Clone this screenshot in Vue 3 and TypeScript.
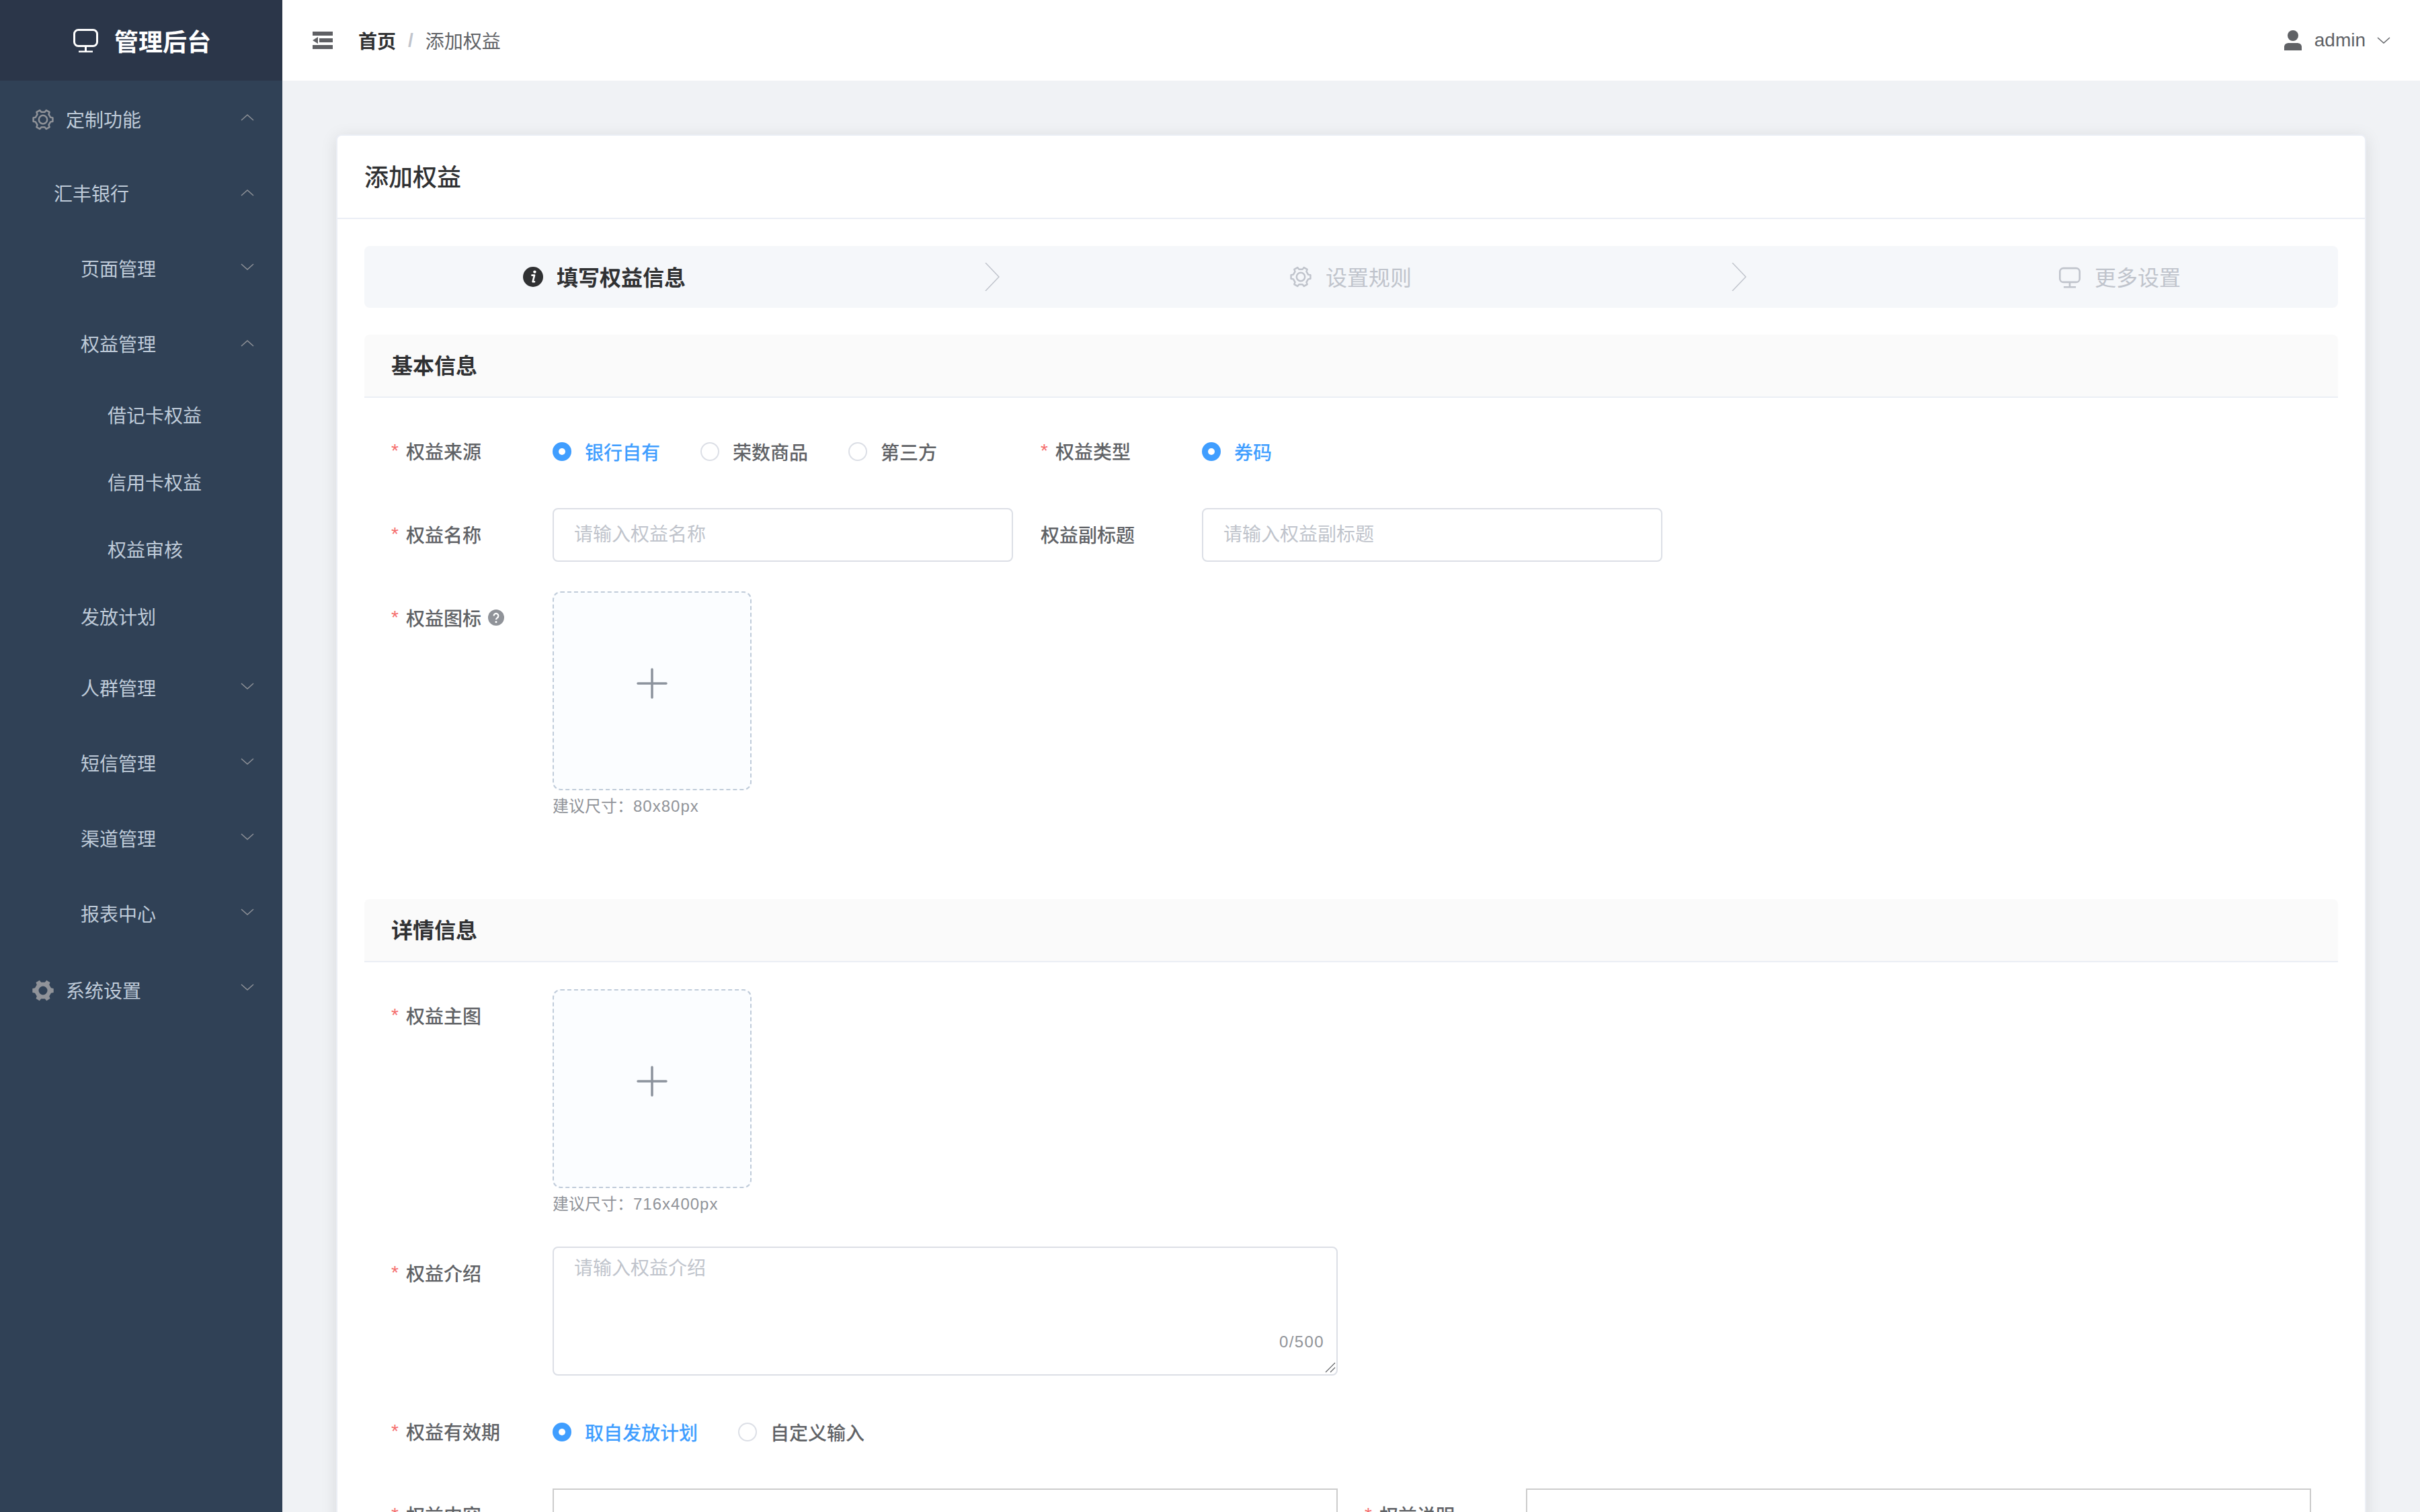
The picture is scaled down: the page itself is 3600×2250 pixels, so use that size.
<template>
  <div class="layout">
    <aside class="sidebar">
      <div class="logo">
        <svg class="logo-icon" viewBox="0 0 37 35" fill="none" stroke="currentColor" stroke-width="3">
          <rect x="1.5" y="1.5" width="34" height="24" rx="6" />
          <path d="M18.5 26v8M8 34h21" />
        </svg>
        <span>管理后台</span>
      </div>
      <nav class="menu">
        <div
          v-for="item in menu"
          :key="item.label"
          :class="['menu-row', 'level-' + item.level, { leaf: !item.arrow }]"
        >
          <svg v-if="item.icon === 'gear'" class="menu-icon" viewBox="0 0 32 32" fill="none" stroke="#909399" stroke-width="2.5" stroke-linejoin="round">
            <path :d="gearOutline" />
            <circle cx="16" cy="16" r="6.2" />
          </svg>
          <svg v-if="item.icon === 'tools'" class="menu-icon" viewBox="0 0 32 32" fill="#909399" fill-rule="evenodd">
            <path :d="gearSolid + ' M22.5 16a6.5 6.5 0 1 0-13 0a6.5 6.5 0 1 0 13 0z'" />
          </svg>
          <span class="menu-label">{{ item.label }}</span>
          <svg v-if="item.arrow" :class="['menu-arrow', item.arrow]" viewBox="0 0 20 10" fill="none" stroke="#909399" stroke-width="1.5">
            <path d="M1 1l9 8 9-8" />
          </svg>
        </div>
      </nav>
    </aside>

    <div class="page">
      <header class="topbar">
        <svg class="hamburger" viewBox="0 0 30 26" fill="#5f6064">
          <rect x="0" y="0" width="30" height="6" />
          <rect x="10" y="10" width="20" height="6" />
          <rect x="0" y="20" width="30" height="6" />
          <path d="M8 8v10L0 13z" />
        </svg>
        <div class="breadcrumb">
          <span class="crumb-home">首页</span>
          <span class="crumb-sep">/</span>
          <span class="crumb-current">添加权益</span>
        </div>
        <div class="user">
          <svg class="user-icon" viewBox="0 0 28 30" fill="#606266">
            <circle cx="14" cy="8" r="8" />
            <path d="M1 30v-5c0-4 3-6 7-6h12c4 0 7 2 7 6v5z" />
          </svg>
          <span>admin</span>
          <svg class="user-arrow" viewBox="0 0 20 10" fill="none" stroke="#606266" stroke-width="1.5">
            <path d="M1 1l9 8 9-8" />
          </svg>
        </div>
      </header>

      <main class="content">
        <section class="card">
          <div class="card-header">添加权益</div>
          <div class="card-body">
            <div class="steps">
              <div class="step active">
                <svg class="step-info" viewBox="0 0 30 30">
                  <circle cx="15" cy="15" r="15" fill="#303133" />
                  <circle cx="17.4" cy="7.6" r="2.2" fill="#fff" />
                  <path d="M13.4 12.6h3.6l-2.4 9.6h2.4" fill="none" stroke="#fff" stroke-width="2.6" stroke-linecap="round" stroke-linejoin="round" />
                </svg>
                <span class="step-text">填写权益信息</span>
              </div>
              <svg class="step-arrow first" viewBox="0 0 22 42" fill="none" stroke="#c0c4cc" stroke-width="1.5">
                <path d="M1 0l20 21L1 42" />
              </svg>
              <div class="step">
                <svg class="step-icon" viewBox="0 0 32 32" fill="none" stroke="#c0c4cc" stroke-width="2.5" stroke-linejoin="round">
                  <path :d="gearOutline" />
                  <circle cx="16" cy="16" r="6.2" />
                </svg>
                <span class="step-text">设置规则</span>
              </div>
              <svg class="step-arrow second" viewBox="0 0 22 42" fill="none" stroke="#c0c4cc" stroke-width="1.5">
                <path d="M1 0l20 21L1 42" />
              </svg>
              <div class="step">
                <svg class="step-icon monitor" viewBox="0 0 37 35" fill="none" stroke="#c0c4cc" stroke-width="3">
                  <rect x="1.5" y="1.5" width="34" height="24" rx="6" />
                  <path d="M18.5 26v8M8 34h21" />
                </svg>
                <span class="step-text">更多设置</span>
              </div>
            </div>

            <div class="section-title">基本信息</div>
            <div class="form basic">
              <div class="row">
                <div class="field">
                  <label class="label"><i class="star">*</i>权益来源</label>
                  <div class="control radios">
                    <span v-for="opt in sources" :key="opt.text" :class="['radio', { checked: opt.checked }]">
                      <i class="dot"></i>{{ opt.text }}
                    </span>
                  </div>
                </div>
                <div class="field">
                  <label class="label"><i class="star">*</i>权益类型</label>
                  <div class="control radios">
                    <span class="radio checked"><i class="dot"></i>券码</span>
                  </div>
                </div>
              </div>
              <div class="row">
                <div class="field">
                  <label class="label"><i class="star">*</i>权益名称</label>
                  <div class="control">
                    <input class="input" type="text" placeholder="请输入权益名称" />
                  </div>
                </div>
                <div class="field">
                  <label class="label">权益副标题</label>
                  <div class="control">
                    <input class="input" type="text" placeholder="请输入权益副标题" />
                  </div>
                </div>
              </div>
              <div class="row">
                <div class="field">
                  <label class="label">
                    <i class="star">*</i>权益图标
                    <svg class="help" viewBox="0 0 24 24">
                      <circle cx="12" cy="12" r="12" fill="#909399" />
                      <path d="M8.6 9.4a3.4 3.4 0 1 1 5.2 2.9c-1.2.8-1.8 1.4-1.8 2.7" fill="none" stroke="#fff" stroke-width="2.2" />
                      <circle cx="12" cy="18.4" r="1.5" fill="#fff" />
                    </svg>
                  </label>
                  <div class="control">
                    <div class="upload">
                      <svg class="plus" viewBox="0 0 46 46" stroke="#8c939d" stroke-width="3.5" stroke-linecap="round">
                        <path d="M23 2v42M2 23h42" />
                      </svg>
                    </div>
                    <div class="hint">建议尺寸：<span class="spaced">80x80px</span></div>
                  </div>
                </div>
              </div>
            </div>

            <div class="section-title">详情信息</div>
            <div class="form">
              <div class="row">
                <div class="field">
                  <label class="label"><i class="star">*</i>权益主图</label>
                  <div class="control">
                    <div class="upload">
                      <svg class="plus" viewBox="0 0 46 46" stroke="#8c939d" stroke-width="3.5" stroke-linecap="round">
                        <path d="M23 2v42M2 23h42" />
                      </svg>
                    </div>
                    <div class="hint">建议尺寸：<span class="spaced">716x400px</span></div>
                  </div>
                </div>
              </div>
              <div class="row">
                <div class="field">
                  <label class="label"><i class="star">*</i>权益介绍</label>
                  <div class="control wide textarea-wrap">
                    <textarea class="textarea" placeholder="请输入权益介绍"></textarea>
                    <span class="count">0/500</span>
                    <svg class="grip" viewBox="0 0 16 16" fill="none" stroke="#606266" stroke-width="1.2">
                      <path d="M15 1L1 15M15 8l-7 7" />
                    </svg>
                  </div>
                </div>
              </div>
              <div class="row">
                <div class="field">
                  <label class="label"><i class="star">*</i>权益有效期</label>
                  <div class="control radios">
                    <span class="radio checked"><i class="dot"></i>取自发放计划</span>
                    <span class="radio"><i class="dot"></i>自定义输入</span>
                  </div>
                </div>
              </div>
              <div class="row editors">
                <div class="field">
                  <label class="label"><i class="star">*</i>权益内容</label>
                  <div class="control wide"><div class="editor"></div></div>
                </div>
                <div class="field">
                  <label class="label"><i class="star">*</i>权益说明</label>
                  <div class="control wide"><div class="editor"></div></div>
                </div>
              </div>
            </div>
          </div>
        </section>
      </main>
    </div>
  </div>
</template>

<script setup lang="ts">
interface MenuItem {
  label: string;
  level: number;
  arrow?: "up" | "down";
  icon?: "gear" | "tools";
}

const menu: MenuItem[] = [
  { label: "定制功能", level: 0, arrow: "up", icon: "gear" },
  { label: "汇丰银行", level: 1, arrow: "up" },
  { label: "页面管理", level: 2, arrow: "down" },
  { label: "权益管理", level: 2, arrow: "up" },
  { label: "借记卡权益", level: 3 },
  { label: "信用卡权益", level: 3 },
  { label: "权益审核", level: 3 },
  { label: "发放计划", level: 2 },
  { label: "人群管理", level: 2, arrow: "down" },
  { label: "短信管理", level: 2, arrow: "down" },
  { label: "渠道管理", level: 2, arrow: "down" },
  { label: "报表中心", level: 2, arrow: "down" },
  { label: "系统设置", level: 0, arrow: "down", icon: "tools" },
];

const sources = [
  { text: "银行自有", checked: true },
  { text: "荣数商品", checked: false },
  { text: "第三方", checked: false },
];

// six-tooth gear centred in a 32x32 box
function gear(outer: number, inner: number): string {
  const pts: string[] = [];
  for (let i = 0; i < 6; i++) {
    const a = i * 60;
    const spots: [number, number][] = [
      [a - 17, inner],
      [a - 11, outer],
      [a + 11, outer],
      [a + 17, inner],
    ];
    for (const [deg, r] of spots) {
      const rad = (deg * Math.PI) / 180;
      pts.push(`${(16 + r * Math.cos(rad)).toFixed(2)} ${(16 + r * Math.sin(rad)).toFixed(2)}`);
    }
  }
  return "M" + pts.join("L") + "Z";
}

const gearOutline = gear(14.7, 11.6);
const gearSolid = gear(16, 12.6);
</script>

<style scoped>
.layout {
  display: flex;
  height: 100vh;
  overflow: hidden;
  font-family: "Liberation Sans", "Noto Sans CJK SC", sans-serif;
  font-size: 28px;
  color: #606266;
}

.sidebar {
  width: 420px;
  flex-shrink: 0;
  background-color: #304156;
}

.logo {
  height: 120px;
  background-color: #2b3649;
  color: #fff;
  display: flex;
  align-items: center;
  padding-left: 109px;
  gap: 24px;
  font-size: 36px;
  font-weight: 700;
}

.logo-icon {
  width: 37px;
  height: 35px;
}

.menu-row {
  display: flex;
  align-items: center;
  height: 112px;
  padding-right: 42px;
  color: #bfcbd9;
}

.menu-row.leaf {
  height: 100px;
}

.menu-label {
  padding-bottom: 3px;
}

.level-0 {
  padding-left: 48px;
}

.level-1 {
  padding-left: 80px;
}

.level-2 {
  padding-left: 120px;
}

.level-3 {
  padding-left: 160px;
}

.menu-icon {
  width: 32px;
  height: 32px;
  margin-right: 18px;
  margin-top: 4px;
}

.level-0 .menu-label {
  margin-top: 4px;
}

.menu-arrow {
  width: 20px;
  height: 10px;
  margin-left: auto;
  margin-top: -7px;
}

.menu-arrow.up {
  transform: rotate(180deg);
  margin-top: -3px;
}

.page {
  flex: 1;
  min-width: 0;
  display: flex;
  flex-direction: column;
  background-color: #f0f2f5;
}

.topbar {
  height: 120px;
  flex-shrink: 0;
  background-color: #fff;
  display: flex;
  align-items: center;
  padding-left: 45px;
  padding-right: 44px;
}

.hamburger {
  width: 30px;
  height: 26px;
}

.breadcrumb {
  margin-left: 38px;
  display: flex;
  align-items: center;
}

.crumb-home {
  font-weight: 700;
  color: #303133;
}

.crumb-sep {
  margin: 0 18px;
  font-weight: 700;
  color: #c0c4cc;
}

.user {
  margin-left: auto;
  display: flex;
  align-items: center;
}

.user-icon {
  width: 28px;
  height: 30px;
  margin-right: 18px;
}

.user-arrow {
  width: 20px;
  height: 10px;
  margin-left: 17px;
}

.content {
  flex: 1;
  min-height: 0;
  overflow: hidden;
  padding: 80px;
}

.card {
  background-color: #fff;
  border: 2px solid #ebeef5;
  border-radius: 8px;
  box-shadow: 0 4px 24px rgba(0, 0, 0, 0.1);
}

.card-header {
  height: 122px;
  line-height: 126px;
  padding: 0 40px;
  font-size: 36px;
  font-weight: 500;
  color: #303133;
  border-bottom: 2px solid #ebeef5;
}

.card-body {
  padding: 40px;
}

.steps {
  display: flex;
  align-items: center;
  height: 92px;
  padding-left: 236px;
  background-color: #f5f7fa;
  border-radius: 8px;
  margin-bottom: 40px;
}

.step {
  display: flex;
  align-items: center;
  gap: 21px;
  font-size: 32px;
  color: #c0c4cc;
  white-space: nowrap;
}

.step-text {
  padding-bottom: 2px;
}

.step.active {
  gap: 20px;
  color: #303133;
  font-weight: 700;
}

.step-info {
  width: 30px;
  height: 30px;
}

.step-icon {
  width: 32px;
  height: 32px;
}

.step-icon.monitor {
  margin-top: 2px;
}

.step-arrow {
  width: 22px;
  height: 42px;
  flex-shrink: 0;
}

.step-arrow.first {
  margin: 0 432px 0 445px;
}

.step-arrow.second {
  margin: 0 465px 0 476px;
}

.section-title {
  height: 92px;
  line-height: 94px;
  padding: 0 40px;
  font-size: 32px;
  font-weight: 700;
  color: #303133;
  background-color: #fafafa;
  border-bottom: 2px solid #ebeef5;
  border-radius: 8px 8px 0 0;
}

.form {
  padding: 40px 40px 0;
}

.form.basic {
  margin-bottom: 119px;
}

.row {
  display: flex;
  gap: 41px;
  margin-bottom: 44px;
}

.row.editors {
  gap: 40px;
}

.field {
  display: flex;
}

.label {
  width: 240px;
  flex-shrink: 0;
  display: flex;
  align-items: center;
  height: 78px;
  padding-bottom: 2px;
  font-weight: 500;
  white-space: nowrap;
}

.star {
  width: 22px;
  flex-shrink: 0;
  color: #f56c6c;
  font-style: normal;
}

.help {
  width: 24px;
  height: 24px;
  margin-left: 10px;
}

.control {
  width: 685px;
}

.control.wide {
  width: 1168px;
}

.radios {
  display: flex;
  align-items: center;
  height: 80px;
  gap: 60px;
  white-space: nowrap;
  font-weight: 500;
}

.radio {
  display: flex;
  align-items: center;
  gap: 20px;
}

.dot {
  width: 28px;
  height: 28px;
  box-sizing: border-box;
  border: 2px solid #dcdfe6;
  border-radius: 50%;
  background-color: #fff;
  display: flex;
  align-items: center;
  justify-content: center;
}

.radio.checked {
  color: #409eff;
}

.radio.checked .dot {
  border-color: #409eff;
  background-color: #409eff;
}

.radio.checked .dot::after {
  content: "";
  width: 10px;
  height: 10px;
  border-radius: 50%;
  background-color: #fff;
}

.input {
  display: block;
  width: 100%;
  height: 80px;
  box-sizing: border-box;
  padding: 0 30px;
  border: 2px solid #dcdfe6;
  border-radius: 8px;
  font: inherit;
  color: #606266;
  outline: none;
}

.input::placeholder,
.textarea::placeholder {
  color: #c0c4cc;
  opacity: 1;
}

.upload {
  width: 296px;
  height: 296px;
  box-sizing: border-box;
  border: 2px dashed #c0ccda;
  border-radius: 12px;
  background-color: #fbfdff;
  display: flex;
  align-items: center;
  justify-content: center;
}

.plus {
  width: 46px;
  height: 46px;
  margin-bottom: 22px;
}

.hint {
  margin-top: 5px;
  line-height: 38px;
  font-size: 24px;
  color: #909399;
}

.spaced {
  letter-spacing: 1px;
}

.textarea-wrap {
  position: relative;
}

.textarea {
  display: block;
  width: 100%;
  height: 192px;
  box-sizing: border-box;
  padding: 10px 30px;
  border: 2px solid #dcdfe6;
  border-radius: 8px;
  font: inherit;
  line-height: 1.5;
  color: #606266;
  outline: none;
  resize: none;
}

.count {
  position: absolute;
  right: 20px;
  bottom: 32px;
  line-height: 36px;
  font-size: 24px;
  letter-spacing: 1.4px;
  color: #909399;
}

.grip {
  position: absolute;
  right: 3px;
  bottom: 4px;
  width: 16px;
  height: 16px;
}

.editor {
  height: 300px;
  box-sizing: border-box;
  border: 2px solid #ccc;
}
</style>

<style>
html,
body {
  margin: 0;
  overflow: hidden;
}
</style>
